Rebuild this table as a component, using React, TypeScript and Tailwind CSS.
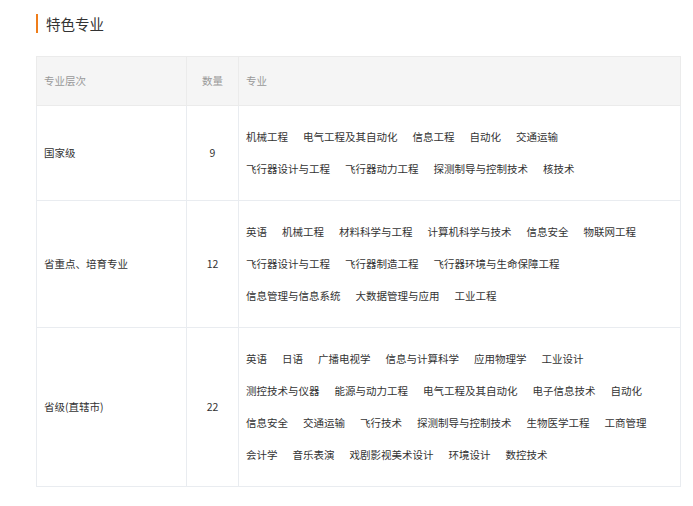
import React from "react";

type Row = { level: string; count: number; lines: string[][] };

const ROWS: Row[] = [
  {
    level: "国家级",
    count: 9,
    lines: [
      ["机械工程", "电气工程及其自动化", "信息工程", "自动化", "交通运输"],
      ["飞行器设计与工程", "飞行器动力工程", "探测制导与控制技术", "核技术"],
    ],
  },
  {
    level: "省重点、培育专业",
    count: 12,
    lines: [
      ["英语", "机械工程", "材料科学与工程", "计算机科学与技术", "信息安全", "物联网工程"],
      ["飞行器设计与工程", "飞行器制造工程", "飞行器环境与生命保障工程"],
      ["信息管理与信息系统", "大数据管理与应用", "工业工程"],
    ],
  },
  {
    level: "省级(直辖市)",
    count: 22,
    lines: [
      ["英语", "日语", "广播电视学", "信息与计算科学", "应用物理学", "工业设计"],
      ["测控技术与仪器", "能源与动力工程", "电气工程及其自动化", "电子信息技术", "自动化"],
      ["信息安全", "交通运输", "飞行技术", "探测制导与控制技术", "生物医学工程", "工商管理"],
      ["会计学", "音乐表演", "戏剧影视美术设计", "环境设计", "数控技术"],
    ],
  },
];

export default function App() {
  return (
    <div
      className="w-[693px] h-[506px] bg-white text-[#333]"
      style={{ fontFamily: '"Noto Sans CJK SC", "Noto Sans", sans-serif' }}
    >
      {/* Title */}
      <div className="flex items-center pl-[36px] pt-[14px]">
        <span className="h-[19px] w-[2px] bg-[#ef7d1a]" />
        <h2 className="ml-[8px] text-[14.5px] leading-[19px] text-[#333]">特色专业</h2>
      </div>

      {/* Table */}
      <table className="ml-[36px] mt-[23px] w-[644px] table-fixed border-collapse text-[10.5px]">
        <colgroup>
          <col className="w-[150px]" />
          <col className="w-[52px]" />
          <col className="w-[442px]" />
        </colgroup>
        <thead>
          <tr className="h-[49px] bg-[#f5f5f5] text-[#999]">
            <th className="border border-[#ebebeb] pl-[7px] text-left font-normal">专业层次</th>
            <th className="border border-[#ebebeb] text-center font-normal">数量</th>
            <th className="border border-[#ebebeb] pl-[7px] text-left font-normal">专业</th>
          </tr>
        </thead>
        <tbody>
          {ROWS.map((row) => (
            <tr key={row.level}>
              <td className="border border-[#e9ecf0] pl-[7px] align-middle">{row.level}</td>
              <td className="border border-[#e9ecf0] text-center align-middle">{row.count}</td>
              <td className="border border-[#e9ecf0] py-[15px] pl-[7px] align-middle">
                {row.lines.map((line, i) => (
                  <div key={i} className="flex gap-[15px] leading-[32px] whitespace-nowrap">
                    {line.map((tag) => (
                      <span key={tag}>{tag}</span>
                    ))}
                  </div>
                ))}
              </td>
            </tr>
          ))}
        </tbody>
      </table>
    </div>
  );
}
